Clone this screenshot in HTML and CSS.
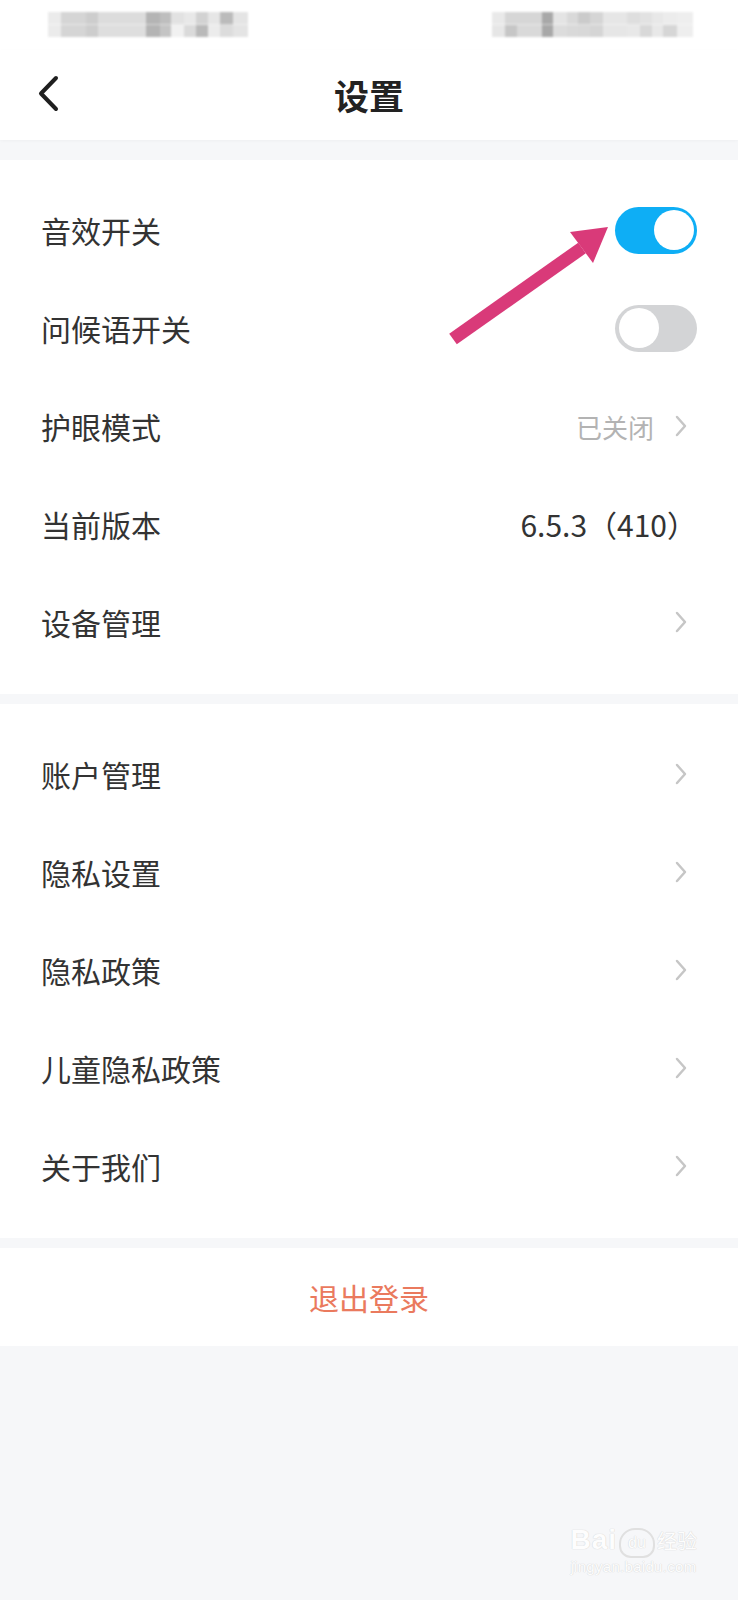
FILE: index.html
```html
<!DOCTYPE html>
<html lang="zh-CN">
<head>
    <meta charset="UTF-8">
    <meta name="viewport" content="width=device-width, initial-scale=1.0">
    <title>设置</title>
    <link rel="stylesheet" href="styles.css">
</head>
<body>
    <div class="phone">
        <div class="status-bar">
            <span class="blur blur-left"></span>
            <span class="blur blur-right"></span>
        </div>

        <header class="nav">
            <button class="back" aria-label="返回">
                <svg width="24" height="40" viewBox="0 0 24 40">
                    <path d="M19 4 L4 19.5 L19 35" fill="none" stroke="#1f1f1f" stroke-width="4" stroke-linecap="round" stroke-linejoin="round"/>
                </svg>
            </button>
            <h1>设置</h1>
            <span></span>
        </header>

        <section class="group">
            <div class="row">
                <span>音效开关</span>
                <span class="toggle on"><span class="knob"></span></span>
            </div>
            <div class="row">
                <span>问候语开关</span>
                <span class="toggle"><span class="knob"></span></span>
            </div>
            <div class="row">
                <span>护眼模式</span>
                <span class="value">
                    <span class="muted">已关闭</span>
                    <svg class="chevron" width="14" height="22" viewBox="0 0 14 22"><path d="M3 2 L11 11 L3 20" fill="none" stroke="#c6c6c6" stroke-width="2.5" stroke-linecap="round" stroke-linejoin="round"/></svg>
                </span>
            </div>
            <div class="row">
                <span>当前版本</span>
                <span class="version">6.5.3（410）</span>
            </div>
            <div class="row">
                <span>设备管理</span>
                <svg class="chevron" width="14" height="22" viewBox="0 0 14 22"><path d="M3 2 L11 11 L3 20" fill="none" stroke="#c6c6c6" stroke-width="2.5" stroke-linecap="round" stroke-linejoin="round"/></svg>
            </div>
        </section>

        <section class="group">
            <div class="row">
                <span>账户管理</span>
                <svg class="chevron" width="14" height="22" viewBox="0 0 14 22"><path d="M3 2 L11 11 L3 20" fill="none" stroke="#c6c6c6" stroke-width="2.5" stroke-linecap="round" stroke-linejoin="round"/></svg>
            </div>
            <div class="row">
                <span>隐私设置</span>
                <svg class="chevron" width="14" height="22" viewBox="0 0 14 22"><path d="M3 2 L11 11 L3 20" fill="none" stroke="#c6c6c6" stroke-width="2.5" stroke-linecap="round" stroke-linejoin="round"/></svg>
            </div>
            <div class="row">
                <span>隐私政策</span>
                <svg class="chevron" width="14" height="22" viewBox="0 0 14 22"><path d="M3 2 L11 11 L3 20" fill="none" stroke="#c6c6c6" stroke-width="2.5" stroke-linecap="round" stroke-linejoin="round"/></svg>
            </div>
            <div class="row">
                <span>儿童隐私政策</span>
                <svg class="chevron" width="14" height="22" viewBox="0 0 14 22"><path d="M3 2 L11 11 L3 20" fill="none" stroke="#c6c6c6" stroke-width="2.5" stroke-linecap="round" stroke-linejoin="round"/></svg>
            </div>
            <div class="row">
                <span>关于我们</span>
                <svg class="chevron" width="14" height="22" viewBox="0 0 14 22"><path d="M3 2 L11 11 L3 20" fill="none" stroke="#c6c6c6" stroke-width="2.5" stroke-linecap="round" stroke-linejoin="round"/></svg>
            </div>
        </section>

        <section class="logout">退出登录</section>

        <!-- 标注箭头，指向音效开关 -->
        <svg class="pointer-arrow" width="738" height="400" viewBox="0 0 738 400">
            <polygon points="456.8,344.3 449.2,333.7 578.2,242.7 585.8,253.3" fill="#d93a79"/>
            <polygon points="608,227 570,232 593,263" fill="#d93a79"/>
        </svg>

        <div class="watermark">
            <div class="wm-logo">
                <span class="wm-bai">Bai</span>
                <span class="wm-paw">du</span>
                <span class="wm-jy">经验</span>
            </div>
            <div class="wm-url">jingyan.baidu.com</div>
        </div>
    </div>
</body>
</html>
```

FILE: styles.css
```css
* {
    box-sizing: border-box;
}
body {
    margin: 0;
    font-family: "Noto Sans CJK SC", "Noto Sans", sans-serif;
    background: #f6f7f9;
}
.phone {
    position: relative;
    width: 738px;
    min-height: 1600px;
    background: #f6f7f9;
    overflow: hidden;
}

/* 状态栏（已打码） */
.status-bar {
    height: 50px;
    background: #fff;
    display: flex;
    justify-content: space-between;
    padding: 12px 45px 0 48px;
}
.blur {
    display: block;
    height: 25px;
    filter: blur(1px);
}
.blur-left {
    width: 200px;
    background:
        linear-gradient(to right,
            #ebebeb 0 13px, #d5d5d5 13px 38px, #cdcdcd 38px 50px, #dcdcdc 50px 98px,
            #b4b4b4 98px 112px, #bebebe 112px 123px, #e2e2e2 123px 136px, #e8e8e8 136px 148px,
            #d2d2d2 148px 160px, #e6e6e6 160px 172px, #bbbbbb 172px 185px, #e4e4e4 185px 200px) top / 100% 50% no-repeat,
        linear-gradient(to right,
            #ebebeb 0 13px, #d5d5d5 13px 38px, #cdcdcd 38px 50px, #dedede 50px 98px,
            #b4b4b4 98px 112px, #c4c4c4 112px 123px, #f1f1f1 123px 136px, #dadada 136px 148px,
            #b9b9b9 148px 160px, #ececec 160px 172px, #dcdcdc 172px 185px, #e4e4e4 185px 200px) bottom / 100% 50% no-repeat;
}
.blur-right {
    width: 201px;
    background:
        linear-gradient(to right,
            #e9e9e9 0 13px, #d6d6d6 13px 50px, #a8a8a8 50px 61px, #e4e4e4 61px 75px,
            #d9d9d9 75px 86px, #cbcbcb 86px 98px, #d5d5d5 98px 111px, #e6e6e6 111px 135px,
            #dedede 135px 148px, #e2e2e2 148px 160px, #e8e8e8 160px 171px, #ececec 171px 185px, #eeeeee 185px 201px) top / 100% 50% no-repeat,
        linear-gradient(to right,
            #e6e6e6 0 13px, #c6c6c6 13px 25px, #d9d9d9 25px 50px, #a8a8a8 50px 61px, #dcdcdc 61px 75px,
            #d9d9d9 75px 86px, #d8d8d8 86px 98px, #d5d5d5 98px 111px, #e6e6e6 111px 135px,
            #e8e8e8 135px 148px, #d8d8d8 148px 160px, #e8e8e8 160px 171px, #d6d6d6 171px 185px, #eeeeee 185px 201px) bottom / 100% 50% no-repeat;
}

/* 顶部导航 */
.nav {
    height: 90px;
    background: #fff;
    display: grid;
    grid-template-columns: 1fr auto 1fr;
    align-items: center;
    padding: 0 37px 2px;
    box-shadow: 0 1px 3px rgba(0,0,0,0.03);
}
.back {
    justify-self: start;
    border: none;
    background: none;
    padding: 0;
    width: 24px;
    height: 40px;
    display: flex;
}
.nav h1 {
    margin: 0;
    font-size: 35px;
    font-weight: bold;
    color: #222;
    line-height: 1;
}

/* 分组列表 */
.group {
    background: #fff;
    margin-top: 20px;
    padding: 21px 0 23px;
}
.group + .group {
    margin-top: 10px;
}
.row {
    height: 98px;
    display: flex;
    align-items: center;
    justify-content: space-between;
    padding: 0 41px;
    font-size: 30px;
    color: #333;
}
.value {
    display: flex;
    align-items: center;
    gap: 20px;
}
.muted {
    font-size: 26px;
    color: #b3b3b3;
}
.chevron {
    margin-right: 9px;
}
.version {
    font-size: 30px;
    color: #333;
}

.toggle {
    width: 82px;
    height: 47px;
    border-radius: 24px;
    background: #d3d4d6;
    display: flex;
    align-items: center;
    padding: 0 3.5px;
}
.toggle.on {
    background: #0eaef5;
    justify-content: flex-end;
}
.knob {
    width: 40px;
    height: 40px;
    border-radius: 50%;
    background: #fff;
}

.logout {
    margin-top: 10px;
    height: 98px;
    background: #fff;
    display: flex;
    align-items: center;
    justify-content: center;
    font-size: 30px;
    color: #ea7a5e;
}

/* 截图上的标注 */
.pointer-arrow {
    position: absolute;
    left: 0;
    top: 0;
    pointer-events: none;
}

.watermark {
    position: absolute;
    right: 41px;
    top: 1522px;
    font-family: "Liberation Sans", Arial, sans-serif;
    color: #fdfdfd;
    text-shadow: 0 0 1px #d6d6d6, 0 0 1px #d6d6d6;
}
.wm-logo {
    display: flex;
    align-items: center;
    gap: 2px;
}
.wm-bai {
    font-size: 28px;
    font-weight: bold;
    letter-spacing: 1px;
}
.wm-paw {
    width: 36px;
    height: 30px;
    border: 2px solid #e0e0e0;
    border-radius: 16px 16px 12px 12px;
    font-size: 16px;
    display: flex;
    align-items: center;
    justify-content: center;
    margin-top: 6px;
}
.wm-jy {
    font-family: "Noto Sans CJK SC", sans-serif;
    font-size: 20px;
}
.wm-url {
    font-size: 15px;
    letter-spacing: 0.3px;
}
```
